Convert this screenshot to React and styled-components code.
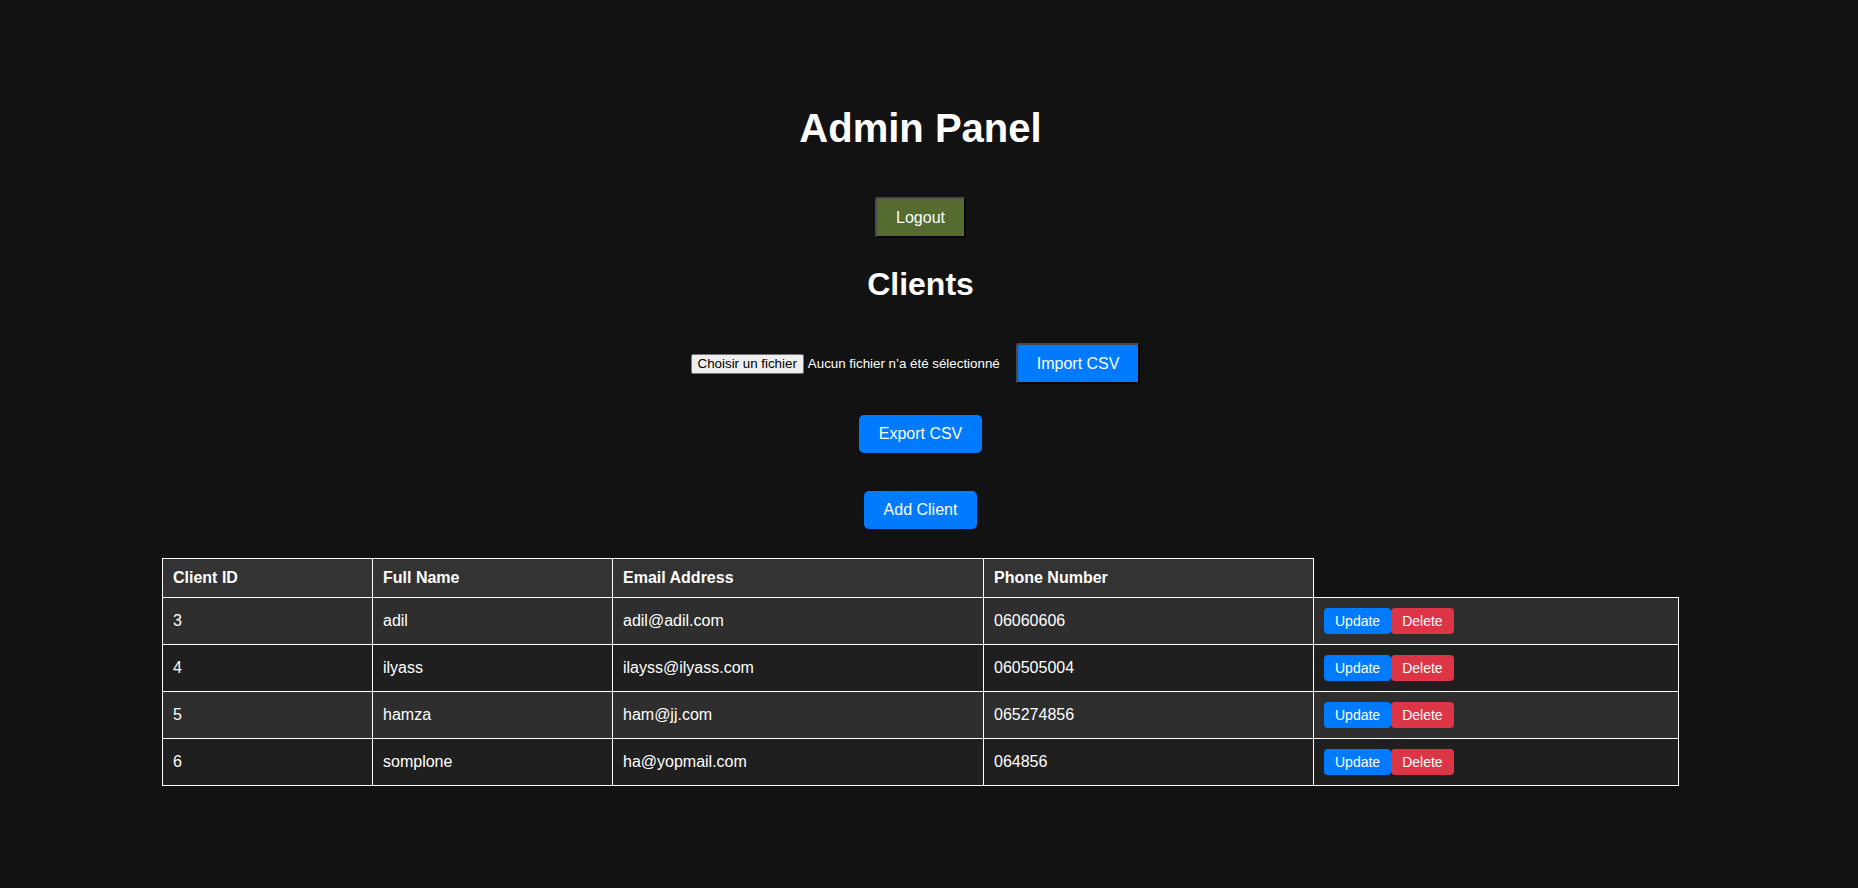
import React from "react";
import styled, { createGlobalStyle } from "styled-components";

const GlobalStyle = createGlobalStyle`
  body {
    margin: 0;
    background-color: #121212;
    color: #ffffff;
    font-family: "Liberation Sans", Arial, sans-serif;
  }
`;

const Page = styled.div`
  box-sizing: border-box;
  min-height: 888px;
  padding: 105px 17px 40px 0;
  display: flex;
  flex-direction: column;
  align-items: center;
`;

const Title = styled.h1`
  margin: 0;
  font-size: 40px;
  line-height: 46px;
  font-weight: 700;
`;

const SubTitle = styled.h2`
  margin: 28px 0 0;
  font-size: 32px;
  line-height: 37px;
  font-weight: 700;
`;

const RaisedButton = styled.button`
  margin-top: ${(p) => p.$top || 0}px;
  margin-left: ${(p) => p.$left || 0}px;
  padding: 9px 19px;
  font-family: "Liberation Sans", Arial, sans-serif;
  font-size: 16px;
  line-height: 19px;
  color: #ffffff;
  background-color: ${(p) => p.$bg};
  border: 2px solid;
  border-color: #4a4a4a #050505 #050505 #4a4a4a;
  border-radius: 3px;
  cursor: pointer;
`;

const FlatButton = styled.button`
  margin-top: ${(p) => p.$top}px;
  padding: 10px 20px;
  font-family: "Liberation Sans", Arial, sans-serif;
  font-size: 16px;
  line-height: 18px;
  color: #ffffff;
  background-color: #007bff;
  border: none;
  border-radius: 5px;
  cursor: pointer;
`;

const FileRow = styled.div`
  margin-top: 40px;
  margin-right: 10px;
  display: flex;
  align-items: center;
`;

const HiddenInput = styled.input`
  display: none;
`;

const FilePick = styled.label`
  display: flex;
  align-items: center;
  gap: 4px;
  font-size: 13.33px;
  cursor: pointer;
`;

const FileButton = styled.span`
  padding: 1px 6px;
  line-height: 16px;
  color: #000000;
  background-color: #efefef;
  border: 1px solid #767676;
  border-radius: 2px;
`;

const FileName = styled.span`
  color: #ffffff;
`;

const Table = styled.table`
  margin-top: 29px;
  width: 1516px;
  table-layout: fixed;
  border-collapse: collapse;
  font-size: 16px;
`;

const Col = styled.col`
  width: ${(p) => p.$w}px;
`;

const HeadCell = styled.th`
  padding: 10px;
  line-height: 18px;
  text-align: left;
  font-weight: 700;
  background-color: #333333;
  border: 1px solid #ffffff;
`;

const Row = styled.tr`
  background-color: #2e2e2e;
  &:nth-child(even) {
    background-color: #1f1f1f;
  }
`;

const Cell = styled.td`
  padding: 10px;
  line-height: 18px;
  border: 1px solid #ffffff;
`;

const Actions = styled.div`
  display: flex;
`;

const SmallButton = styled.button`
  padding: 5px 11px;
  font-family: "Liberation Sans", Arial, sans-serif;
  font-size: 14px;
  line-height: 16px;
  color: #ffffff;
  background-color: ${(p) => (p.$danger ? "#dc3545" : "#007bff")};
  border: none;
  border-radius: 4px;
  cursor: pointer;
`;

const clients = [
  { id: 3, name: "adil", email: "adil@adil.com", phone: "06060606" },
  { id: 4, name: "ilyass", email: "ilayss@ilyass.com", phone: "060505004" },
  { id: 5, name: "hamza", email: "ham@jj.com", phone: "065274856" },
  { id: 6, name: "somplone", email: "ha@yopmail.com", phone: "064856" },
];

const App = () => {
  return (
    <>
      <GlobalStyle />
      <Page>
        <Title>Admin Panel</Title>
        <RaisedButton $top={46} $bg="#556b2f">
          Logout
        </RaisedButton>
        <SubTitle>Clients</SubTitle>

        <FileRow>
          <FilePick>
            <HiddenInput type="file" accept=".csv" />
            <FileButton>Choisir un fichier</FileButton>
            <FileName>Aucun fichier n’a été sélectionné</FileName>
          </FilePick>
          <RaisedButton $left={16} $bg="#007bff">
            Import CSV
          </RaisedButton>
        </FileRow>

        <FlatButton $top={31}>Export CSV</FlatButton>
        <FlatButton $top={38}>Add Client</FlatButton>

        <Table>
          <colgroup>
            <Col $w={210} />
            <Col $w={240} />
            <Col $w={371} />
            <Col $w={330} />
            <Col $w={365} />
          </colgroup>
          <thead>
            <tr>
              <HeadCell>Client ID</HeadCell>
              <HeadCell>Full Name</HeadCell>
              <HeadCell>Email Address</HeadCell>
              <HeadCell>Phone Number</HeadCell>
            </tr>
          </thead>
          <tbody>
            {clients.map((c) => (
              <Row key={c.id}>
                <Cell>{c.id}</Cell>
                <Cell>{c.name}</Cell>
                <Cell>{c.email}</Cell>
                <Cell>{c.phone}</Cell>
                <Cell>
                  <Actions>
                    <SmallButton>Update</SmallButton>
                    <SmallButton $danger>Delete</SmallButton>
                  </Actions>
                </Cell>
              </Row>
            ))}
          </tbody>
        </Table>
      </Page>
    </>
  );
};

export default App;
